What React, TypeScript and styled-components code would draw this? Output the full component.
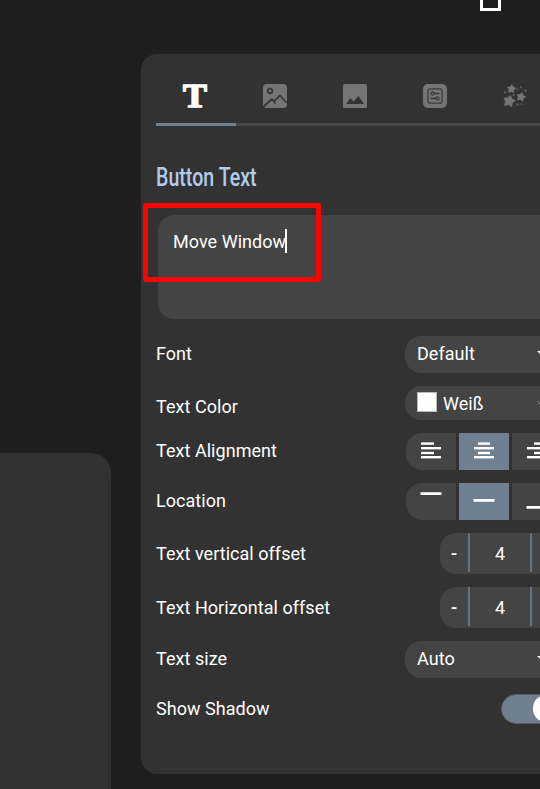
import React from "react";
import styled, { createGlobalStyle } from "styled-components";

const GlobalStyle = createGlobalStyle`
  html, body { margin: 0; background: #1e1e1e; overflow: hidden; }
  *, *::before, *::after { box-sizing: border-box; }
`;

const Page = styled.main`
  position: relative;
  display: grid;
  grid-template-columns: 111px 600px;
  column-gap: 30px;
  width: 540px;
  height: 789px;
  overflow: hidden;
  background: #1e1e1e;
  color: #fff;
  font: 18px/24px Roboto, sans-serif;
  letter-spacing: 0.04px;
`;

const WindowIcon = styled.svg`
  position: absolute;
  left: 480px;
  top: 0;
`;

const SidePanel = styled.aside`
  margin-top: 453px;
  background: #323232;
  border-radius: 0 20px 0 0;
`;

const Panel = styled.section`
  margin-top: 54px;
  height: 720px;
  padding: 0 0 0 15px;
  background: #323232;
  border-radius: 16px;
`;

const Tabs = styled.nav`
  display: flex;
  height: 72px;
  border-bottom: 3px solid #474747;
`;

const Tab = styled.div<{ $active?: boolean }>`
  display: flex;
  justify-content: center;
  width: 80px;
  height: 72px;
  padding-top: 30px;
  padding-right: 2px;
  flex: none;
  border-bottom: 3px solid ${(p) => (p.$active ? "#708090" : "transparent")};

  svg { overflow: visible; }
`;

const Heading = styled.h2`
  margin: 34px 0 0;
  height: 36px;
  width: max-content;
  font: 500 25px/35px Roboto, sans-serif;
  letter-spacing: 0;
  color: #b0cdec;
  transform: scaleX(0.785);
  transform-origin: left;
`;

const TextBox = styled.div`
  display: flex;
  align-items: flex-start;
  margin: 19px 0 17px 2px;
  height: 104px;
  padding: 15px 15px;
  background: #444;
  border-radius: 16px;
`;

const Caret = styled.span`
  width: 1.5px;
  height: 24px;
  margin: -1px 0 0 -1px;
  background: #fff;
`;

const Highlight = styled.div`
  position: absolute;
  left: 143px;
  top: 203px;
  width: 178px;
  height: 79px;
  border: 5px solid #f00;
  border-radius: 3px;
`;

const Rows = styled.div`
  display: flex;
  flex-direction: column;
  gap: 13px;
`;

const Row = styled.div<{ $h: number; $gapTop?: number }>`
  display: flex;
  align-items: center;
  height: ${(p) => p.$h}px;
  margin-top: ${(p) => p.$gapTop ?? 0}px;
`;

const Label = styled.span<{ $drop?: number; $lift?: number; $indent: number }>`
  flex: none;
  width: ${(p) => p.$indent}px;
  padding-top: ${(p) => p.$drop ?? 0}px;
  padding-bottom: ${(p) => p.$lift ?? 0}px;
  white-space: nowrap;
`;

const Select = styled.div<{ $h: number; $drop?: boolean }>`
  display: flex;
  align-items: center;
  width: 154px;
  height: ${(p) => p.$h}px;
  padding: ${(p) => (p.$drop ? "2px 12px 0" : "0 12px 1.5px")};
  background: #444;
  border-radius: 16px;
`;

const Swatch = styled.span`
  width: 20px;
  height: 20px;
  margin: -3px 6px 1px 0;
  background: #fff;
  border: 1px solid #bbb;
`;

const Arrow = styled.svg`
  margin-left: auto;
  flex: none;
`;

const Segments = styled.div`
  display: flex;
  gap: 3px;
  height: 36.5px;
  align-self: flex-start;
  border-radius: 16px;
  overflow: hidden;
`;

const Segment = styled.div<{ $active?: boolean }>`
  width: 50px;
  height: 36.5px;
  background: ${(p) => (p.$active ? "#708090" : "#444")};
`;

const Stepper = styled.div`
  display: flex;
  height: 40.5px;
  background: #444;
  border-radius: 16px;
  overflow: hidden;
`;

const StepButton = styled.div<{ $strong?: boolean }>`
  display: flex;
  align-items: center;
  justify-content: center;
  width: 28px;
  font-weight: ${(p) => (p.$strong ? 500 : 400)};
`;

const StepValue = styled.div`
  display: flex;
  align-items: center;
  justify-content: center;
  width: 64px;
  height: 39px;
  padding-top: 2px;
  border: solid #667584;
  border-width: 0 2px;
`;

const Toggle = styled.div`
  display: flex;
  justify-content: flex-end;
  width: 60px;
  height: 30px;
  background: #708090;
  border: 1.5px solid #555b62;
  border-radius: 15px;
`;

const Knob = styled.span`
  width: 27px;
  height: 27px;
  background: #fff;
  border-radius: 13px;
`;

const lines = {
  left: [[15, 13], [15, 20], [15, 13], [15, 20]],
  center: [[19, 12], [15, 20], [19, 12], [15, 20]],
  right: [[22, 13], [15, 20], [22, 13], [15, 20]],
};
const lineTops = [9.4, 14, 18.8, 23];

const AlignIcon = ({ kind }: { kind: keyof typeof lines }) => (
  <svg width="50" height="36" fill="#fff">
    {lines[kind].map(([x, w], i) => (
      <rect key={i} x={x} y={lineTops[i]} width={w} height={2.4} />
    ))}
  </svg>
);

const BarIcon = ({ y }: { y: number }) => (
  <svg width="50" height="36">
    <rect x="14.5" y={y} width="21" height="2.7" rx="0.4" fill="#fff" />
  </svg>
);

const DropArrow = ({ dim }: { dim?: boolean }) => (
  <Arrow width="10" height="6">
    {dim ? (
      <path d="M.5 .5 5 5 9.5 .5" fill="none" stroke="#999" />
    ) : (
      <path d="M0 0H10L5 5Z" fill="#fff" />
    )}
  </Arrow>
);

const star = (cx: number, cy: number, r: number, turn = 0) =>
  Array.from({ length: 10 }, (_, i) => {
    const a = (-90 + turn + i * 36) * (Math.PI / 180);
    const q = i % 2 ? r * 0.58 : r;
    return `${cx + q * Math.cos(a)},${cy + q * Math.sin(a)}`;
  }).join(" ");

const TextIcon = () => (
  <svg width="24" height="24" viewBox="0 0 24 24">
    <text
      x="12"
      y="23.3"
      textAnchor="middle"
      textLength="24"
      lengthAdjust="spacingAndGlyphs"
      fontFamily="Liberation Serif, serif"
      fontWeight="700"
      fontSize="34.5"
      fill="#fff"
      stroke="#fff"
      strokeWidth="1.5"
    >
      T
    </text>
  </svg>
);

const PictureIcon = () => (
  <svg width="24" height="24" viewBox="0 0 24 24">
    <rect width="24" height="24" rx="3.5" fill="#757575" />
    <g fill="none" stroke="#363636" strokeWidth="1.8">
      <circle cx="7" cy="7" r="2.3" />
      <path d="M0 23 9 15 12.5 19.5M10.8 17.3 17 11.5 24 19" strokeLinejoin="round" />
    </g>
  </svg>
);

const LandscapeIcon = () => (
  <svg width="24" height="24" viewBox="0 0 24 24">
    <rect width="24" height="24" rx="1.5" fill="#757575" />
    <path d="M3 20 7.3 14 10.6 17.5 15.4 12 21 20Z" fill="#323232" />
  </svg>
);

const SettingsIcon = () => (
  <svg width="24" height="24" viewBox="0 0 24 24">
    <rect width="24" height="24" rx="5" fill="#757575" />
    <g fill="none" stroke="#3b3b3b" strokeWidth="1.3">
      <rect x="5" y="4.8" width="14" height="14.4" rx="2" />
      <circle cx="9.5" cy="9.5" r="1.5" />
      <path d="M11 9.5H16.5M7.5 14.5H13" />
      <circle cx="14.5" cy="14.5" r="1.5" />
    </g>
  </svg>
);

const StarsIcon = () => (
  <svg width="24" height="24" viewBox="0 0 24 24" fill="#757575">
    <g stroke="#757575" strokeWidth="0.7" strokeLinejoin="round">
      <polygon points={star(8.5, 5, 4.3, 5)} />
      <polygon points={star(18, 13, 4.6, 15)} />
      <polygon points={star(6.2, 17.2, 6.2, 12)} />
    </g>
    <g fill="#5a5a5a">
      <circle cx="18" cy="3.2" r="1.1" />
      <circle cx="14.5" cy="5.5" r="1.1" />
      <circle cx="22.5" cy="6.5" r="1.3" />
      <circle cx="2" cy="8.5" r="1.3" />
      <circle cx="10.5" cy="11" r="1.2" />
      <circle cx="14.5" cy="20.5" r="1.2" />
      <circle cx="18.5" cy="20" r="1" />
    </g>
  </svg>
);

export default function App() {
  return (
    <>
      <GlobalStyle />
      <Page>
        <SidePanel />
        <Panel>
          <Tabs>
            <Tab $active><TextIcon /></Tab>
            <Tab><PictureIcon /></Tab>
            <Tab><LandscapeIcon /></Tab>
            <Tab><SettingsIcon /></Tab>
            <Tab><StarsIcon /></Tab>
          </Tabs>
          <Heading>Button Text</Heading>
          <TextBox>Move Window<Caret /></TextBox>
          <Rows>
            <Row $h={37}>
              <Label $indent={249} $lift={2}>Font</Label>
              <Select $h={36.5}>Default<DropArrow /></Select>
            </Row>
            <Row $h={34}>
              <Label $indent={249} $drop={7}>Text Color</Label>
              <Select $h={33.5} $drop><Swatch />Weiß<DropArrow dim /></Select>
            </Row>
            <Row $h={37}>
              <Label $indent={250} $lift={2}>Text Alignment</Label>
              <Segments>
                <Segment><AlignIcon kind="left" /></Segment>
                <Segment $active><AlignIcon kind="center" /></Segment>
                <Segment><AlignIcon kind="right" /></Segment>
              </Segments>
            </Row>
            <Row $h={37}>
              <Label $indent={250} $lift={2}>Location</Label>
              <Segments>
                <Segment><BarIcon y={9.3} /></Segment>
                <Segment $active><BarIcon y={16.1} /></Segment>
                <Segment><BarIcon y={23.1} /></Segment>
              </Segments>
            </Row>
            {["Text vertical offset", "Text Horizontal offset"].map((name) => (
              <Row $h={41} key={name}>
                <Label $indent={284}>{name}</Label>
                <Stepper>
                  <StepButton $strong>-</StepButton>
                  <StepValue>4</StepValue>
                  <StepButton>+</StepButton>
                </Stepper>
              </Row>
            ))}
            <Row $h={37}>
              <Label $indent={249} $lift={2}>Text size</Label>
              <Select $h={36.5}>Auto<DropArrow /></Select>
            </Row>
            <Row $h={30} $gapTop={3}>
              <Label $indent={345}>Show Shadow</Label>
              <Toggle><Knob /></Toggle>
            </Row>
          </Rows>
        </Panel>
        <WindowIcon width="22" height="12">
          <path d="M1.5 0V9.6H19.5V0" fill="none" stroke="#fff" strokeWidth="3" />
        </WindowIcon>
        <Highlight />
      </Page>
    </>
  );
}
